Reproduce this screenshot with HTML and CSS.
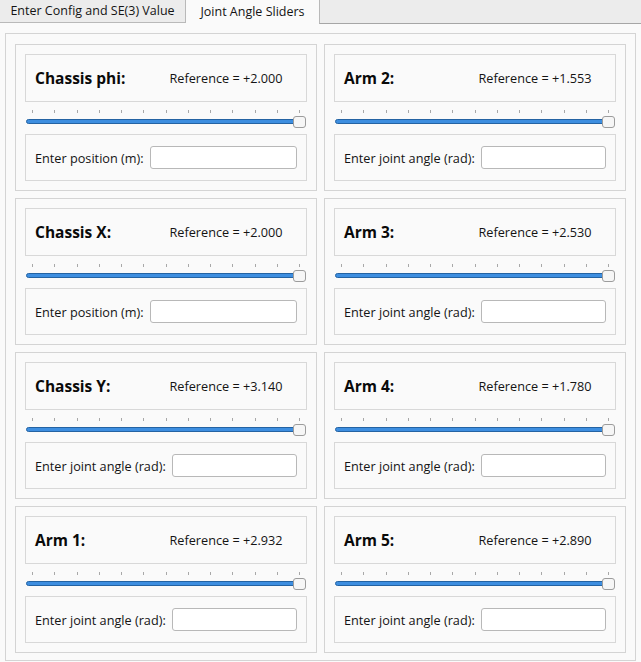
FILE: index.html
```html
<!DOCTYPE html>
<html>
<head>
<meta charset="utf-8">
<link rel="stylesheet" href="styles.css">
</head>
<body>
<div class="tabbar">
  <div class="tab">Enter Config and SE(3) Value</div>
  <div class="tab active">Joint Angle Sliders</div>
  <div class="filler"></div>
</div>
<div class="group">
  <div class="card">
    <div class="head"><span class="title">Chassis phi:</span><span class="ref">Reference = +2.000</span></div>
    <div class="slider"><div class="ticks"><i></i><i></i><i></i><i></i><i></i><i></i><i></i><i></i><i></i><i></i><i></i><i></i><i></i></div><div class="track"><span class="handle"></span></div></div>
    <div class="entry"><span>Enter position (m):</span><input class="field" type="text"></div>
  </div>
  <div class="card">
    <div class="head"><span class="title">Arm 2:</span><span class="ref">Reference = +1.553</span></div>
    <div class="slider"><div class="ticks"><i></i><i></i><i></i><i></i><i></i><i></i><i></i><i></i><i></i><i></i><i></i><i></i><i></i></div><div class="track"><span class="handle"></span></div></div>
    <div class="entry"><span>Enter joint angle (rad):</span><input class="field" type="text"></div>
  </div>
  <div class="card">
    <div class="head"><span class="title">Chassis X:</span><span class="ref">Reference = +2.000</span></div>
    <div class="slider"><div class="ticks"><i></i><i></i><i></i><i></i><i></i><i></i><i></i><i></i><i></i><i></i><i></i><i></i><i></i></div><div class="track"><span class="handle"></span></div></div>
    <div class="entry"><span>Enter position (m):</span><input class="field" type="text"></div>
  </div>
  <div class="card">
    <div class="head"><span class="title">Arm 3:</span><span class="ref">Reference = +2.530</span></div>
    <div class="slider"><div class="ticks"><i></i><i></i><i></i><i></i><i></i><i></i><i></i><i></i><i></i><i></i><i></i><i></i><i></i></div><div class="track"><span class="handle"></span></div></div>
    <div class="entry"><span>Enter joint angle (rad):</span><input class="field" type="text"></div>
  </div>
  <div class="card">
    <div class="head"><span class="title">Chassis Y:</span><span class="ref">Reference = +3.140</span></div>
    <div class="slider"><div class="ticks"><i></i><i></i><i></i><i></i><i></i><i></i><i></i><i></i><i></i><i></i><i></i><i></i><i></i></div><div class="track"><span class="handle"></span></div></div>
    <div class="entry"><span>Enter joint angle (rad):</span><input class="field" type="text"></div>
  </div>
  <div class="card">
    <div class="head"><span class="title">Arm 4:</span><span class="ref">Reference = +1.780</span></div>
    <div class="slider"><div class="ticks"><i></i><i></i><i></i><i></i><i></i><i></i><i></i><i></i><i></i><i></i><i></i><i></i><i></i></div><div class="track"><span class="handle"></span></div></div>
    <div class="entry"><span>Enter joint angle (rad):</span><input class="field" type="text"></div>
  </div>
  <div class="card">
    <div class="head"><span class="title">Arm 1:</span><span class="ref">Reference = +2.932</span></div>
    <div class="slider"><div class="ticks"><i></i><i></i><i></i><i></i><i></i><i></i><i></i><i></i><i></i><i></i><i></i><i></i><i></i></div><div class="track"><span class="handle"></span></div></div>
    <div class="entry"><span>Enter joint angle (rad):</span><input class="field" type="text"></div>
  </div>
  <div class="card">
    <div class="head"><span class="title">Arm 5:</span><span class="ref">Reference = +2.890</span></div>
    <div class="slider"><div class="ticks"><i></i><i></i><i></i><i></i><i></i><i></i><i></i><i></i><i></i><i></i><i></i><i></i><i></i></div><div class="track"><span class="handle"></span></div></div>
    <div class="entry"><span>Enter joint angle (rad):</span><input class="field" type="text"></div>
  </div>
</div>
</body>
</html>
```

FILE: styles.css
```css
* { box-sizing: border-box; }
html, body {
  margin: 0;
  padding: 0;
  background: #fafafa;
  width: 641px;
  height: 662px;
  overflow: hidden;
}
body {
  font-family: "Open Sans", "DejaVu Sans", sans-serif;
  font-size: 12.7px;
  color: #141414;
}
.tabbar {
  display: flex;
  height: 24px;
}
.tab {
  width: 186px;
  height: 23px;
  background: #ececec;
  border-right: 1px solid #b9b9b9;
  border-bottom: 1px solid #b9b9b9;
  display: flex;
  align-items: center;
  justify-content: center;
  padding-bottom: 1px;
  font-size: 12.5px;
}
.tab.active {
  width: 133px;
  height: 24px;
  background: #fafafa;
  border: none;
  padding-bottom: 2px;
}
.filler {
  flex: 1;
  height: 24px;
  background: #ececec;
  border-left: 1px solid #b9b9b9;
  border-bottom: 1px solid #a6a6a6;
}
.group {
  margin: 9px 5px 0 5px;
  height: 628px;
  border: 1px solid #d4d4d4;
  padding: 10px 9px 9px 9px;
  display: grid;
  grid-template-columns: 1fr 1fr;
  grid-template-rows: repeat(4, 1fr);
  gap: 7px;
}
.card {
  border: 1px solid #d4d4d4;
  padding: 9px;
  display: flex;
  flex-direction: column;
}
.head {
  height: 48px;
  border: 1px solid #d8d8d8;
  display: grid;
  grid-template-columns: 1fr 1fr;
  column-gap: 8px;
  align-items: center;
  padding: 0 10px 0 9px;
}
.title {
  font-weight: bold;
  font-size: 15.5px;
  color: #0a0a0a;
}
.slider {
  height: 32px;
  padding: 8px 1px 0 1px;
}
.ticks {
  display: flex;
  justify-content: space-between;
  padding: 0 6px;
  height: 3px;
  margin-bottom: 6px;
}
.ticks i {
  width: 1px;
  height: 3px;
  background: #a8a8a8;
}
.track {
  position: relative;
  height: 5px;
  background: #3d8ee0;
  border: 1px solid #2463a3;
  border-radius: 3px;
}
.handle {
  position: absolute;
  right: -1px;
  top: -4px;
  width: 13px;
  height: 12px;
  background: #f6f6f6;
  border: 1px solid #9c9c9c;
  border-radius: 3px;
}
.entry {
  height: 47px;
  border: 1px solid #d8d8d8;
  display: flex;
  align-items: center;
  gap: 6px;
  padding: 0 9px 0 9px;
}
.field {
  flex: 1;
  min-width: 0;
  height: 23px;
  border: 1px solid #b8b8b8;
  border-radius: 3px;
  background: #fff;
  margin: 0;
  padding: 0 4px;
}
```
